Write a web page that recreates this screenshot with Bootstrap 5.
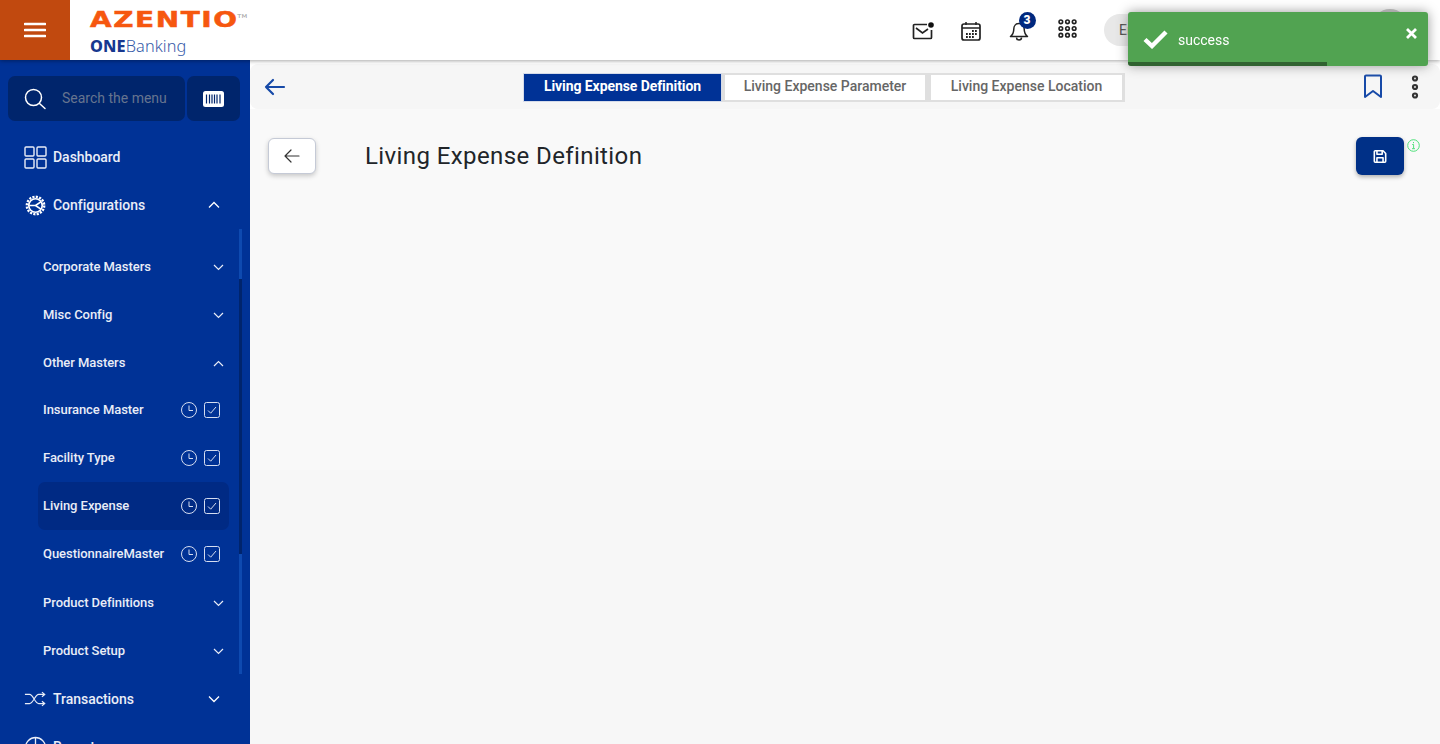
<!DOCTYPE html>
<html lang="en">
<head>
<meta charset="utf-8">
<title>Living Expense Definition</title>
<link rel="stylesheet" href="https://cdn.jsdelivr.net/npm/bootstrap@5.3.0/dist/css/bootstrap.min.css">
<script src="https://cdn.jsdelivr.net/npm/bootstrap@5.3.0/dist/js/bootstrap.bundle.min.js"></script>
<style>
html,body{height:744px;overflow:hidden}
body{font-family:Roboto,"Liberation Sans",sans-serif;background:#fff;color:#212529}
.topbar{height:60px;background:#fff;box-shadow:0 1px 4px rgba(0,0,0,.35);position:relative;z-index:5;flex:none}
.burger{width:70px;height:60px;background:#c1490f;border:0;padding:0;flex:none}
.logo-box{padding-left:20px;width:180px;flex:none}
.logo-az{font-family:"DejaVu Sans",sans-serif;font-weight:700;font-size:21px;line-height:24px;letter-spacing:1.200px;color:#f6570f;-webkit-text-stroke:.5px #f6570f;white-space:nowrap;height:24px;margin-top:8px;transform:scaleX(1.33);transform-origin:left center}
.logo-az sup{font-size:5px;font-weight:400;color:#999;letter-spacing:0;-webkit-text-stroke:0;top:-1.900em;margin-left:-1px}
.logo-one{font-family:"Noto Sans",sans-serif;font-size:16.300px;font-weight:300;line-height:20px;color:#3459a8;margin-top:4px;white-space:nowrap;letter-spacing:.1px}
.logo-one b{font-weight:800;color:#17388f}
.top-ico{flex:none;display:block}
.tools{gap:0;padding-right:32px}
.tool-slot{width:48px;display:flex;justify-content:center;position:relative;margin-top:2px}
.apps-slot{margin-top:0;margin-bottom:4px}
.bell-num{position:absolute;left:23.500px;top:-9px;width:17px;height:17px;border-radius:50%;background:#00287f;color:#fff;font-size:12px;font-weight:900;line-height:17px;text-align:center}
.lang-pill{width:100px;height:32px;border-radius:16px;background:#e8e8e8;font-size:14px;line-height:32px;padding-left:15px;margin-left:13px;color:#444}
.avatar{width:36px;height:36px;border-radius:50%;background:#b9b9b9;margin-left:168px;margin-top:-6px}
.sidenav{width:250px;flex:none;background:#003296;position:relative;overflow:hidden}
.searchrow{padding:16px 10px 0 8px;gap:2px;height:61px}
.searchbox{width:177px;height:45px;background:#00256c;border-radius:7px;padding-left:15px;color:#66748f;font-size:14px;gap:15px;white-space:nowrap}
.barcodebox{width:53px;height:45px;background:#00256c;border-radius:7px}
.menu-l1,.menu-l2{height:48px;color:#e9edf7;font-weight:500;white-space:nowrap}
.menu-l1{font-size:14px;padding:0 30px 0 24px;letter-spacing:-.03px}
.menu-l1 svg.lead-ico{margin-right:6px;flex:none}
.menu-l2{font-size:13px;margin-left:38px;width:191px;padding:0 5px;border-radius:7px;letter-spacing:-.05px}
.menu-l2.is-active{background:#002a84}
.has-chev{padding-top:2px}
.menu-top{padding-top:12px}
.menu-sub{padding-top:13px}
.leaf-ico{gap:7px;margin-left:auto;margin-right:4px}
.scroll-strip{position:absolute;left:239px;top:169px;width:3px;height:445px;background:linear-gradient(#0e4ab0 0 50px,#00246c 50px 325px,#0e4ab0 325px)}
.mainarea{background:#fff;min-width:0}
.crumbbar{height:45px;margin-top:4px;background:#f6f6f6;border-radius:8px;padding:0 17px 0 14px;position:relative;flex:none}
.tabset{position:absolute;left:273px;top:9px;height:29px}
.tabitem{height:29px;background:#fff;border:solid #dfdfdf;border-width:2px 3px;color:#666;font-size:14px;font-weight:500;display:flex;align-items:center;justify-content:center;white-space:nowrap;padding-bottom:2px}
.tabitem.is-on{background:#003296;border-color:#d5dbe9;border-width:1px;color:#fff;font-weight:700;letter-spacing:-.08px}
.dots-ico{margin-left:28px}
.bodypane{background:linear-gradient(#f9f9f9 0 361px,#f7f7f7 361px)}
.headrow{padding:28px 20px 0 18px}
.backbtn{width:48px;height:36px;background:#fff;border:1px solid #c5cad6;border-radius:6px;box-shadow:0 2px 5px rgba(0,0,0,.2);padding:0;margin-top:1px}
.pagetitle{font-size:24px;font-weight:400;letter-spacing:.4px;margin:1px 0 0 49px;line-height:36px;color:#212529}
.savebtn{width:48px;height:38px;background:#003087;border:0;border-radius:6px;box-shadow:0 2px 4px rgba(0,0,0,.3);padding:0}
.infoslot{margin:2px 0 0 3px}
.toastbox{position:fixed;top:12px;right:12px;width:300px;height:54px;background:#51a351;border-radius:3px;box-shadow:0 0 12px #999;color:#fff;z-index:20;overflow:hidden;font-size:14px;padding-left:15px}
.toast-label{margin-left:10px;position:relative;top:1px}
.toast-x{position:absolute;right:11px;top:16px;display:block}
.toast-track{position:absolute;left:0;bottom:0;height:4px;background:rgba(0,0,0,.4)}
</style>
</head>
<body class="d-flex flex-column">
<header class="topbar d-flex align-items-center">
  <button class="burger d-flex align-items-center justify-content-center" aria-label="menu">
    <svg width="22" height="16" viewBox="0 0 22 16"><path d="M1 2h20M1 8h20M1 14h20" stroke="#fff" stroke-width="2.600" stroke-linecap="round"/></svg>
  </button>
  <div class="logo-box align-self-start">
    <div class="logo-az">AZENTIO<sup>TM</sup></div>
    <div class="logo-one"><b>ONE</b>Banking</div>
  </div>
  <div class="tools ms-auto d-flex align-items-center">
    <div class="tool-slot">
      <svg class="top-ico" width="22" height="18" viewBox="0 0 22 18"><path d="M15 2.500H2.500a1 1 0 0 0-1 1v12a1 1 0 0 0 1 1h16a1 1 0 0 0 1-1V8" fill="none" stroke="#222" stroke-width="1.700"/><path d="M4 6l6.500 5L16 7" fill="none" stroke="#222" stroke-width="1.600"/><circle cx="19" cy="3" r="2.800" fill="#111"/></svg>
    </div>
    <div class="tool-slot">
      <svg class="top-ico" width="20" height="20" viewBox="0 0 20 20"><rect x="1" y="3" width="18" height="16" rx="2" fill="none" stroke="#222" stroke-width="1.700"/><path d="M1 7h18M5 1v3M15 1v3" stroke="#222" stroke-width="1.500"/><path d="M11 10h1.800M14 10h1.800M5 13h1.800M8 13h1.800M11 13h1.800M14 13h1.800M5 16h1.800M8 16h1.800M11 16h1.800" stroke="#222" stroke-width="1.900"/></svg>
    </div>
    <div class="tool-slot">
      <svg class="top-ico" width="20" height="21" viewBox="0 0 20 21"><path d="M10 2.500c-3.300 0-5.200 2.500-5.200 5.500 0 4-1.200 5.700-3.300 7.500h17c-2.100-1.800-3.300-3.500-3.300-7.500 0-3-1.900-5.500-5.200-5.500z" fill="none" stroke="#222" stroke-width="1.500" stroke-linejoin="round"/><path d="M7.500 16.500a2.500 2.500 0 0 0 5 0" fill="none" stroke="#222" stroke-width="1.500"/></svg>
      <span class="bell-num">3</span>
    </div>
    <div class="tool-slot apps-slot">
      <svg class="top-ico" width="19" height="19" viewBox="0 0 20 20" fill="none" stroke="#222" stroke-width="1.700"><circle cx="3" cy="3" r="1.900"/><circle cx="10" cy="3" r="1.900"/><circle cx="17" cy="3" r="1.900"/><circle cx="3" cy="10" r="1.900"/><circle cx="10" cy="10" r="1.900"/><circle cx="17" cy="10" r="1.900"/><circle cx="3" cy="17" r="1.900"/><circle cx="10" cy="17" r="1.900"/><circle cx="17" cy="17" r="1.900"/></svg>
    </div>
    <div class="lang-pill">English</div>
    <div class="avatar"></div>
  </div>
</header>

<div class="d-flex flex-grow-1 overflow-hidden">
  <nav class="sidenav">
    <div class="searchrow d-flex">
      <div class="searchbox d-flex align-items-center">
        <svg width="24" height="24" viewBox="0 0 24 24" fill="none" stroke="#fff" stroke-width="1.500"><circle cx="10.500" cy="10.500" r="8"/><path d="M16.500 16.500l5.500 5" stroke-linecap="round"/></svg>
        <span>Search the menu</span>
      </div>
      <div class="barcodebox d-flex align-items-center justify-content-center">
        <svg width="21" height="16" viewBox="0 0 21 16"><rect width="21" height="16" rx="2.500" fill="#fff"/><path d="M3.500 3.500v9M6.500 3.500v9M9 3.500v9M11.500 3.500v9M14 3.500v9M17 3.500v9" stroke="#00256c" stroke-width="1.200"/></svg>
      </div>
    </div>
    <div class="menu-top">
      <div class="menu-l1 d-flex align-items-center">
        <svg class="lead-ico" width="23" height="23" viewBox="0 0 23 23" fill="none" stroke="#e9edf7" stroke-width="1.400"><rect x="1" y="1" width="9" height="9" rx="1"/><rect x="13" y="1" width="9" height="9" rx="1"/><rect x="1" y="13" width="9" height="9" rx="1"/><rect x="13" y="13" width="9" height="9" rx="1"/></svg>
        <span>Dashboard</span>
      </div>
      <div class="menu-l1 d-flex align-items-center">
        <svg class="lead-ico" width="23" height="23" viewBox="-1.300 -1.300 25.600 25.600" fill="none" stroke="#fff"><circle cx="11.500" cy="11.500" r="7.500" stroke-width="1.900"/><circle cx="11.500" cy="11.500" r="9.700" stroke-width="2.600" stroke-dasharray="2.400 1.410"/><path d="M11.500 11.500L17.500 7.500M11.500 11.500L17.500 15.500M11.500 11.500H4.500" stroke-width="1.800"/></svg>
        <span>Configurations</span>
        <svg class="ms-auto" width="12" height="8" viewBox="0 0 12 8" fill="none" stroke="#fff" stroke-width="1.300"><path d="M1 6.500l5-5 5 5"/></svg>
      </div>
    </div>
    <div class="menu-sub">
      <div class="menu-l2 has-chev d-flex align-items-center"><span>Corporate Masters</span><svg class="ms-auto" width="11" height="7" viewBox="0 0 11 7" fill="none" stroke="#e9edf7" stroke-width="1.200"><path d="M1 1l4.500 4.500L10 1"/></svg></div>
      <div class="menu-l2 has-chev d-flex align-items-center"><span>Misc Config</span><svg class="ms-auto" width="11" height="7" viewBox="0 0 11 7" fill="none" stroke="#e9edf7" stroke-width="1.200"><path d="M1 1l4.500 4.500L10 1"/></svg></div>
      <div class="menu-l2 has-chev d-flex align-items-center"><span>Other Masters</span><svg class="ms-auto" width="11" height="7" viewBox="0 0 11 7" fill="none" stroke="#e9edf7" stroke-width="1.200"><path d="M1 6l4.500-4.500L10 6"/></svg></div>
      <div class="menu-l2 d-flex align-items-center"><span>Insurance Master</span><div class="leaf-ico d-flex"><svg width="16" height="16" viewBox="0 0 16 16" fill="none" stroke="#d5ddf0" stroke-width="1"><circle cx="8" cy="8" r="7.500"/><path d="M8 3.500V8.500h4"/></svg><svg width="16" height="16" viewBox="0 0 16 16" fill="none" stroke="#d5ddf0" stroke-width="1"><rect x=".5" y=".5" width="15" height="15" rx="2"/><path d="M4 8.500l2.700 2.700L12 5"/></svg></div></div>
      <div class="menu-l2 d-flex align-items-center"><span>Facility Type</span><div class="leaf-ico d-flex"><svg width="16" height="16" viewBox="0 0 16 16" fill="none" stroke="#d5ddf0" stroke-width="1"><circle cx="8" cy="8" r="7.500"/><path d="M8 3.500V8.500h4"/></svg><svg width="16" height="16" viewBox="0 0 16 16" fill="none" stroke="#d5ddf0" stroke-width="1"><rect x=".5" y=".5" width="15" height="15" rx="2"/><path d="M4 8.500l2.700 2.700L12 5"/></svg></div></div>
      <div class="menu-l2 is-active d-flex align-items-center"><span>Living Expense</span><div class="leaf-ico d-flex"><svg width="16" height="16" viewBox="0 0 16 16" fill="none" stroke="#d5ddf0" stroke-width="1"><circle cx="8" cy="8" r="7.500"/><path d="M8 3.500V8.500h4"/></svg><svg width="16" height="16" viewBox="0 0 16 16" fill="none" stroke="#d5ddf0" stroke-width="1"><rect x=".5" y=".5" width="15" height="15" rx="2"/><path d="M4 8.500l2.700 2.700L12 5"/></svg></div></div>
      <div class="menu-l2 d-flex align-items-center"><span>QuestionnaireMaster</span><div class="leaf-ico d-flex"><svg width="16" height="16" viewBox="0 0 16 16" fill="none" stroke="#d5ddf0" stroke-width="1"><circle cx="8" cy="8" r="7.500"/><path d="M8 3.500V8.500h4"/></svg><svg width="16" height="16" viewBox="0 0 16 16" fill="none" stroke="#d5ddf0" stroke-width="1"><rect x=".5" y=".5" width="15" height="15" rx="2"/><path d="M4 8.500l2.700 2.700L12 5"/></svg></div></div>
      <div class="menu-l2 has-chev d-flex align-items-center"><span>Product Definitions</span><svg class="ms-auto" width="11" height="7" viewBox="0 0 11 7" fill="none" stroke="#e9edf7" stroke-width="1.200"><path d="M1 1l4.500 4.500L10 1"/></svg></div>
      <div class="menu-l2 has-chev d-flex align-items-center"><span>Product Setup</span><svg class="ms-auto" width="11" height="7" viewBox="0 0 11 7" fill="none" stroke="#e9edf7" stroke-width="1.200"><path d="M1 1l4.500 4.500L10 1"/></svg></div>
    </div>
    <div class="menu-l1 has-chev d-flex align-items-center">
      <svg class="lead-ico" width="23" height="16" viewBox="-1 -.5 25 17" fill="none" stroke="#e9edf7" stroke-width="1.300"><path d="M0 3h5c4 0 6 10 10 10h6M0 13h5c4 0 6-10 10-10h6M18.500 .5L21.500 3l-3 2.500M18.500 10.500l3 2.500-3 2.500"/></svg>
      <span>Transactions</span>
      <svg class="ms-auto" width="12" height="8" viewBox="0 0 12 8" fill="none" stroke="#fff" stroke-width="1.300"><path d="M1 1.500l5 5 5-5"/></svg>
    </div>
    <div class="menu-l1 has-chev d-flex align-items-center">
      <svg class="lead-ico" width="23" height="23" viewBox="0 0 23 23" fill="none" stroke="#e9edf7" stroke-width="1.300"><circle cx="11.500" cy="11.500" r="10"/><path d="M11.500 1.500v10h10"/></svg>
      <span>Reports</span>
    </div>
    <div class="scroll-strip"></div>
  </nav>

  <main class="mainarea flex-grow-1 d-flex flex-column">
    <div class="crumbbar d-flex align-items-center">
      <svg width="22" height="18" viewBox="0 0 22 18" fill="none" stroke="#174aa8" stroke-width="2.200" stroke-linecap="round" stroke-linejoin="round"><path d="M20 9H2M9 2L2 9l7 7"/></svg>
      <div class="tabset d-flex">
        <div class="tabitem is-on" style="width:199px">Living Expense Definition</div>
        <div class="tabitem" style="width:206px">Living Expense Parameter</div>
        <div class="tabitem" style="width:197px">Living Expense Location</div>
      </div>
      <svg class="ms-auto" width="20" height="25" viewBox="0 0 20 25" fill="none" stroke="#174aa8" stroke-width="2" stroke-linejoin="round"><path d="M2 2.500a1 1 0 0 1 1-1h14a1 1 0 0 1 1 1V23l-8-6-8 6z"/></svg>
      <svg class="dots-ico me-1" width="8" height="24" viewBox="0 0 8 24" fill="none" stroke="#333" stroke-width="2.200"><circle cx="4" cy="3.500" r="2"/><circle cx="4" cy="12" r="2"/><circle cx="4" cy="20.500" r="2"/></svg>
    </div>
    <div class="bodypane flex-grow-1">
      <div class="headrow d-flex align-items-start">
        <button class="backbtn d-flex align-items-center justify-content-center" aria-label="back">
          <svg width="16" height="14" viewBox="0 0 16 14" fill="none" stroke="#333" stroke-width="1.200" stroke-linecap="round" stroke-linejoin="round"><path d="M15 7H1M7 1L1 7l6 6"/></svg>
        </button>
        <h1 class="pagetitle">Living Expense Definition</h1>
        <button class="savebtn ms-auto d-flex align-items-center justify-content-center" aria-label="save">
          <svg width="14" height="15" viewBox="0 0 16 16" fill="none" stroke="#fff" stroke-width="1.800" stroke-linejoin="round"><path d="M1.500 2.500a1 1 0 0 1 1-1h9l3 3v9a1 1 0 0 1-1 1h-11a1 1 0 0 1-1-1z"/><path d="M4.500 1.500v4h6v-4M4.500 14.500v-5h7v5"/></svg>
        </button>
        <div class="infoslot">
          <svg class="d-block" width="13" height="13" viewBox="0 0 13 13" fill="none" stroke="#4fe07a" stroke-width="1"><circle cx="6.500" cy="6.500" r="5.800"/><path d="M5.200 5.500h1.400v4M5 9.700h3M6.500 3v1.200"/></svg>
        </div>
      </div>
    </div>
  </main>
</div>

<div class="toastbox d-flex align-items-center" role="alert">
  <svg width="25" height="20" viewBox="0 0 25 20" fill="none" stroke="#fff" stroke-width="4.400"><path d="M2 10.500l7 6.500L23 3"/></svg>
  <span class="toast-label">success</span>
  <svg class="toast-x" width="11" height="11" viewBox="0 0 11 11" fill="none" stroke="#fff" stroke-width="2.800"><path d="M1 1l9 9M10 1l-9 9"/></svg>
  <div class="toast-track" style="width:199px"></div>
</div>
</body>
</html>
